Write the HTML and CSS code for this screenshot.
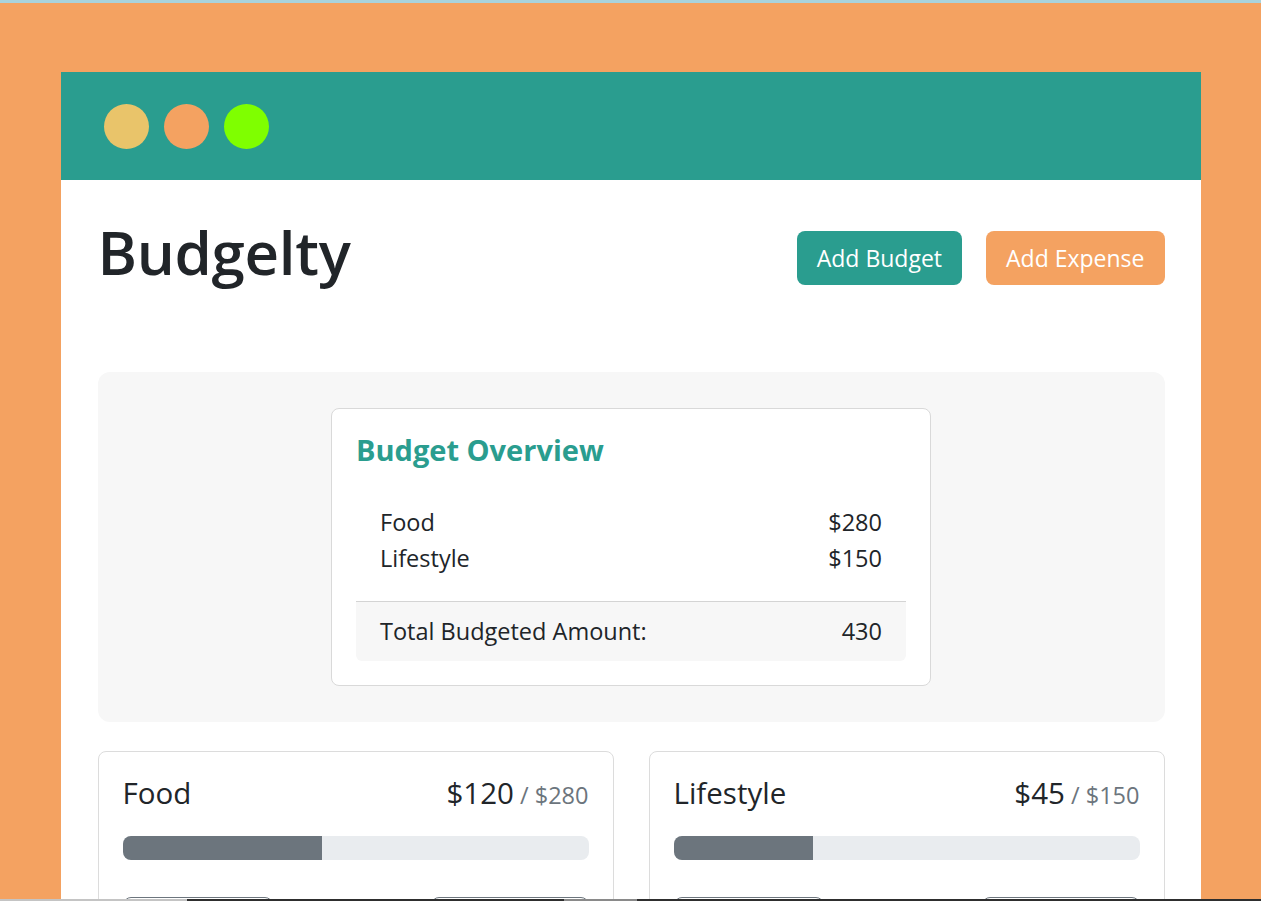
FILE: index.html
```html
<!DOCTYPE html>
<html lang="en">
<head>
<meta charset="utf-8">
<title>Budgelty</title>
<link rel="stylesheet" href="styles.css">
</head>
<body>
<div class="topline"></div>
<div class="window">
  <div class="titlebar">
    <span class="dot dot-yellow"></span>
    <span class="dot dot-orange"></span>
    <span class="dot dot-green"></span>
  </div>
  <main class="content">
    <header class="page-head">
      <h1 class="brand">Budgelty</h1>
      <div class="actions">
        <button class="btn btn-teal">Add Budget</button>
        <button class="btn btn-orange">Add Expense</button>
      </div>
    </header>

    <section class="overview">
      <div class="overview-card">
        <h2 class="overview-title">Budget Overview</h2>
        <div class="ov-list">
          <div class="ov-row"><span>Food</span><span>$280</span></div>
          <div class="ov-row"><span>Lifestyle</span><span>$150</span></div>
        </div>
        <div class="ov-total"><span>Total Budgeted Amount:</span><span>430</span></div>
      </div>
    </section>

    <section class="budgets">
      <div class="budget-card">
        <div class="bc-head">
          <span class="bc-name">Food</span>
          <span class="bc-amount">$120<span class="bc-of"> / $280</span></span>
        </div>
        <div class="progress"><div class="progress-fill" style="width: 42.86%"></div></div>
        <div class="bc-actions">
          <button class="btn-outline btn-view">View Expenses</button>
          <button class="btn-outline btn-delete">Delete Budget</button>
        </div>
      </div>
      <div class="budget-card">
        <div class="bc-head">
          <span class="bc-name">Lifestyle</span>
          <span class="bc-amount">$45<span class="bc-of"> / $150</span></span>
        </div>
        <div class="progress"><div class="progress-fill" style="width: 30%"></div></div>
        <div class="bc-actions">
          <button class="btn-outline btn-view">View Expenses</button>
          <button class="btn-outline btn-delete">Delete Budget</button>
        </div>
      </div>
    </section>
  </main>
</div>
<div class="taskbar">
  <span class="tb-light"></span><span class="tb-dark"></span><span class="tb-mid"></span><span class="tb-dark2"></span>
</div>
</body>
</html>
```

FILE: styles.css
```css
* { box-sizing: border-box; }
html, body { margin: 0; padding: 0; }
body {
  background: #f4a261;
  font-family: "Open Sans", "Noto Sans", sans-serif;
  color: #212529;
  padding-top: 72px;
}
.topline {
  position: fixed;
  top: 0; left: 0; right: 0;
  height: 3px;
  background: #a9d3dc;
}
.window {
  width: 1140px;
  margin: 0 auto;
  background: #fff;
}
.titlebar {
  height: 108px;
  background: #2a9d8f;
  display: flex;
  align-items: center;
  gap: 15px;
  padding-left: 43px;
}
.dot { width: 45px; height: 45px; border-radius: 50%; display: block; }
.dot-yellow { background: #e9c46a; }
.dot-orange { background: #f4a261; }
.dot-green { background: #7fff00; }

.content { padding: 36px 36px 40px 37px; }

.page-head {
  display: flex;
  justify-content: space-between;
  align-items: flex-start;
  height: 156px;
}
.brand {
  margin: 0;
  font-size: 60px;
  font-weight: 600;
  line-height: 1.2;
  letter-spacing: -0.3px;
}
.actions { display: flex; gap: 24px; margin-top: 15px; }
.btn {
  height: 54px;
  border: none;
  border-radius: 8px;
  color: #fff;
  font-family: inherit;
  font-size: 23px;
  padding: 0 20px;
}
.btn-teal { background: #2a9d8f; }
.btn-orange { background: #f4a261; }

.overview {
  background: #f7f7f7;
  border-radius: 12px;
  padding: 36px 0 36px;
  display: flex;
  justify-content: center;
}
.overview-card {
  width: 600px;
  background: #fff;
  border: 1px solid #d9d9d9;
  border-radius: 8px;
  padding: 24px;
}
.overview-title {
  margin: 0 0 36px;
  color: #2a9d8f;
  font-size: 29px;
  font-weight: 700;
  line-height: 1.2;
}
.ov-list { padding: 0 24px; margin-bottom: 25px; }
.ov-row, .ov-total {
  display: flex;
  justify-content: space-between;
  align-items: center;
  font-size: 23.5px;
}
.ov-row { height: 36px; }
.ov-total {
  height: 60px;
  padding: 0 24px;
  border-top: 1px solid #d4d4d4;
  background: #f7f7f7;
  border-radius: 0 0 6px 6px;
}

.budgets {
  margin-top: 29px;
  display: grid;
  grid-template-columns: 1fr 1fr;
  gap: 35px;
}
.budget-card {
  border: 1px solid #dcdcdc;
  border-radius: 8px;
  padding: 23px 24px 24px;
}
.bc-head {
  display: flex;
  justify-content: space-between;
  align-items: baseline;
  line-height: 1.2;
}
.bc-name, .bc-amount { font-size: 29.5px; }
.bc-of { font-size: 23.5px; color: #6c757d; }
.progress {
  margin-top: 26px;
  height: 24px;
  border-radius: 8px;
  background: #e9ecef;
  overflow: hidden;
}
.progress-fill { height: 100%; background: #6c757d; }
.bc-actions {
  margin-top: 37px;
  display: flex;
  justify-content: space-between;
}
.btn-outline {
  height: 48px;
  background: #fff;
  border: 1px solid #6c757d;
  border-radius: 8px;
  color: #6c757d;
  font-family: inherit;
  font-size: 18px;
}
.btn-view { width: 150px; }
.btn-delete { width: 158px; }

.taskbar {
  position: fixed;
  left: 0; right: 0; bottom: 0;
  height: 2px;
  display: flex;
}
.taskbar span { display: block; height: 100%; }
.tb-light { width: 187px; background: #c4c4c4; }
.tb-dark { width: 377px; background: #2e2e2e; }
.tb-mid { width: 73px; background: #8a8a8a; }
.tb-dark2 { flex: 1; background: #2e2e2e; }
```
